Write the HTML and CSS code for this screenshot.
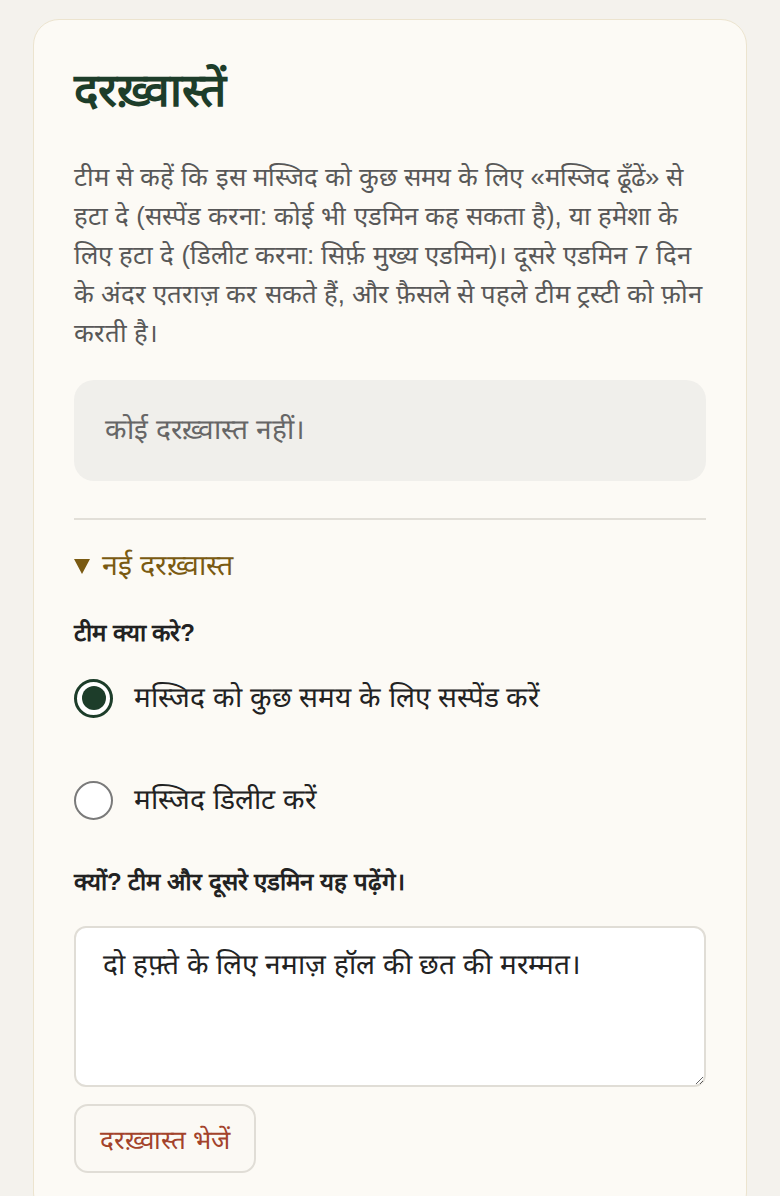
FILE: index.html
```html
<!DOCTYPE html>
<html lang="hi">
<head>
<meta charset="utf-8">
<title>दरख़्वास्तें</title>
<link rel="stylesheet" href="styles.css">
</head>
<body>
<main class="card">
  <h1 class="title">दरख़्वास्तें</h1>
  <p class="intro">टीम से कहें कि इस मस्जिद को कुछ समय के लिए «मस्जिद ढूँढें» से हटा दे (सस्पेंड करना: कोई भी एडमिन कह सकता है), या हमेशा के लिए हटा दे (डिलीट करना: सिर्फ़ मुख्य एडमिन)। दूसरे एडमिन 7 दिन के अंदर एतराज़ कर सकते हैं, और फ़ैसले से पहले टीम ट्रस्टी को फ़ोन करती है।</p>
  <div class="empty">कोई दरख़्वास्त नहीं।</div>
  <hr class="divider">
  <details class="new" open>
    <summary class="new-summary"><span class="caret"></span>नई दरख़्वास्त</summary>
    <form class="form">
      <p class="label">टीम क्या करे?</p>
      <label class="option"><input type="radio" name="action" class="radio" checked><span>मस्जिद को कुछ समय के लिए सस्पेंड करें</span></label>
      <label class="option option-second"><input type="radio" name="action" class="radio"><span>मस्जिद डिलीट करें</span></label>
      <p class="label label-why">क्यों? टीम और दूसरे एडमिन यह पढ़ेंगे।</p>
      <textarea class="reason">दो हफ़्ते के लिए नमाज़ हॉल की छत की मरम्मत।</textarea>
      <button type="button" class="submit">दरख़्वास्त भेजें</button>
    </form>
  </details>
</main>
</body>
</html>
```
FILE: styles.css
```css
* { box-sizing: border-box; }
html, body { margin: 0; padding: 0; }
body {
  background: #f4f2ed;
  font-family: sans-serif;
  color: #222;
  padding: 19px 33px 0;
}
.card {
  background: #fcfaf5;
  border: 1px solid #ece4cf;
  border-radius: 26px;
  padding: 40px 40px 24px;
  min-height: 1200px;
}
.title {
  margin: 0;
  font-size: 46px;
  line-height: 60px;
  font-weight: 800;
  color: #1d3d2a;
}
.intro {
  margin: 38px 0 0;
  font-size: 25.7px;
  line-height: 39px;
  color: #585858;
}
.empty {
  margin-top: 27px;
  background: #f0efeb;
  border-radius: 20px;
  padding: 29px 31px 30px;
  font-size: 28px;
  line-height: 42px;
  color: #666;
}
.divider {
  margin: 37px 0 0;
  border: 0;
  border-top: 2px solid #e2dfd8;
}
.new { margin-top: 24px; }
.new-summary {
  display: flex;
  align-items: center;
  font-size: 28.5px;
  line-height: 42px;
  color: #7a5a12;
  cursor: pointer;
  list-style: none;
}
.new-summary::-webkit-details-marker { display: none; }
.caret {
  width: 0;
  height: 0;
  border-left: 8px solid transparent;
  border-right: 8px solid transparent;
  border-top: 15px solid #7a5a12;
  margin-right: 12px;
  margin-top: 2px;
}
.form { display: flex; flex-direction: column; align-items: flex-start; }
.label {
  margin: 29px 0 0;
  font-size: 24px;
  line-height: 36px;
  font-weight: 700;
  color: #222;
}
.option {
  display: flex;
  align-items: center;
  gap: 21px;
  font-size: 28px;
  line-height: 42px;
  color: #222;
  margin-top: 26px;
}
.option-second { margin-top: 60px; }
.radio {
  appearance: none;
  -webkit-appearance: none;
  margin: 0;
  width: 39px;
  height: 39px;
  border-radius: 50%;
  border: 2px solid #7a7a7a;
  background: #fff;
  display: grid;
  place-items: center;
  flex: none;
}
.radio:checked {
  border: 3px solid #1d3d2a;
}
.radio:checked::after {
  content: "";
  width: 24px;
  height: 24px;
  border-radius: 50%;
  background: #1d3d2a;
}
.label-why { margin-top: 43px; }
.reason {
  margin-top: 26px;
  width: 100%;
  height: 161px;
  border: 2px solid #e0ddd6;
  border-radius: 12px;
  background: #fff;
  padding: 16px 27px;
  font-family: inherit;
  font-size: 28px;
  line-height: 42px;
  color: #222;
  resize: vertical;
}
.submit {
  margin-top: 17px;
  height: 69px;
  padding: 0 24px;
  border: 2px solid #e0ddd6;
  border-radius: 14px;
  background: #fbf9f4;
  color: #a3432b;
  font-family: inherit;
  font-size: 26px;
}
```
